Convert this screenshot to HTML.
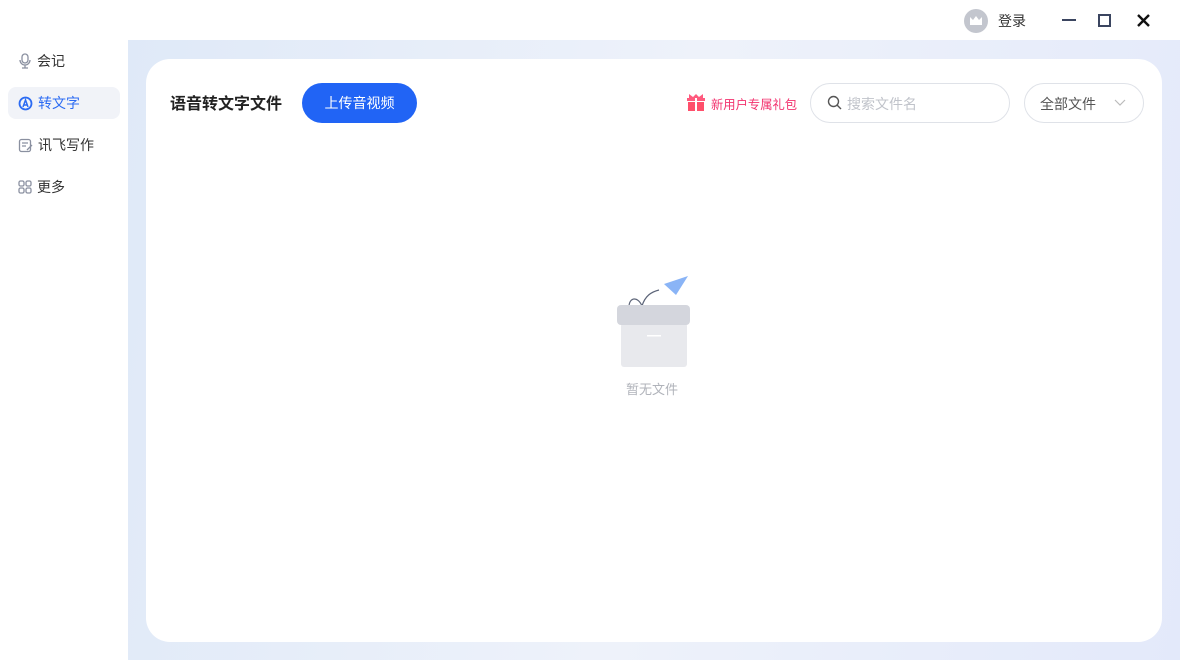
<!DOCTYPE html>
<html><head><meta charset="utf-8"><style>
*{margin:0;padding:0;box-sizing:border-box}
body{width:1180px;height:660px;overflow:hidden;background:#fff;font-family:"Liberation Sans","Noto Sans CJK SC",sans-serif;position:relative}
.top{position:absolute;left:0;top:0;width:1180px;height:40px;background:#fff}
.side{position:absolute;left:0;top:40px;width:128px;height:620px;background:#fff}
.item{position:absolute;left:8px;width:112px;height:32px;border-radius:8px;font-size:14px;color:#333;display:flex;align-items:center;padding-left:10px}
.item svg{margin-right:5px}
.main{position:absolute;left:128px;top:40px;width:1052px;height:620px;background:linear-gradient(100deg,#dfe9f8,#eef2fa 50%,#e3e9fa)}
.card{position:absolute;left:18px;top:19px;width:1016px;height:583px;background:#fff;border-radius:24px}
</style></head><body>
<div class="top">
<div style="position:absolute;left:964px;top:9px;width:24px;height:24px;border-radius:50%;background:#c3c6ce"></div>
<svg style="position:absolute;left:969px;top:15px" width="14" height="11"><path d="M1 2 L4 5 L7 1 L10 5 L13 2 V10 H1Z" fill="#fff"/></svg>
<div style="position:absolute;left:998px;top:11px;font-size:14px;color:#333">登录</div>
<div style="position:absolute;left:1062px;top:19px;width:14px;height:2px;background:#3b4560"></div>
<div style="position:absolute;left:1098px;top:14px;width:13px;height:13px;border:2.5px solid #3b4560"></div>
<svg style="position:absolute;left:1137px;top:14px" width="13" height="13"><path d="M1 1L12 12M12 1L1 12" stroke="#111" stroke-width="2.4"/></svg>
</div>
<div class="side">
<div class="item" style="top:5px"><svg width="14" height="16"><rect x="4" y="1" width="6" height="9" rx="3" fill="none" stroke="#8a90a0" stroke-width="1.3"/><path d="M2 7a5 5 0 0 0 10 0M7 12v3M4 15h6" fill="none" stroke="#8a90a0" stroke-width="1.3"/></svg>会记</div>
<div class="item" style="top:47px;background:#f1f3f8;color:#2b6bf3"><svg width="15" height="15"><circle cx="7.5" cy="7.5" r="6" fill="none" stroke="#2b6bf3" stroke-width="1.8"/><path d="M5 11L7.5 4L10 11M6 9h3" fill="none" stroke="#2b6bf3" stroke-width="1.5"/></svg>转文字</div>
<div class="item" style="top:89px"><svg width="15" height="15"><rect x="1.5" y="1.5" width="11" height="12" rx="2" fill="none" stroke="#8a90a0" stroke-width="1.3"/><path d="M4 5h6M4 8h4M9 12l5-5" stroke="#8a90a0" stroke-width="1.3"/></svg>讯飞写作</div>
<div class="item" style="top:131px"><svg width="14" height="14" fill="none" stroke="#8a90a0" stroke-width="1.3"><rect x="1" y="1" width="5" height="5" rx="1.5"/><rect x="8" y="1" width="5" height="5" rx="1.5"/><rect x="1" y="8" width="5" height="5" rx="1.5"/><rect x="8" y="8" width="5" height="5" rx="1.5"/></svg>更多</div>
</div>
<div class="main"><div class="card">
<div style="position:absolute;left:24px;top:31px;font-size:16px;font-weight:600;color:#222">语音转文字文件</div>
<div style="position:absolute;left:156px;top:24px;width:115px;height:40px;border-radius:20px;background:#2164f5;color:#fff;font-size:14px;display:flex;align-items:center;justify-content:center">上传音视频</div>
<svg style="position:absolute;left:540px;top:33px" width="20" height="20"><path d="M3 2l4 3 3-3 3 3 4-3v4H3z" fill="#ff5a7e"/><rect x="1" y="6" width="18" height="3" fill="#ff5a7e"/><rect x="2" y="10" width="16" height="9" fill="#ff4f6b"/><rect x="9" y="6" width="2" height="13" fill="#fff"/></svg>
<div style="position:absolute;left:565px;top:36px;font-size:12.3px;color:#f2326e">新用户专属礼包</div>
<div style="position:absolute;left:664px;top:24px;width:200px;height:40px;border:1px solid #dfe2e8;border-radius:20px"></div>
<svg style="position:absolute;left:681px;top:36px" width="16" height="16"><circle cx="6.5" cy="6.5" r="5" fill="none" stroke="#555" stroke-width="1.4"/><path d="M10 10l4 4" stroke="#555" stroke-width="1.4"/></svg>
<div style="position:absolute;left:701px;top:35px;font-size:14px;color:#c0c3ca">搜索文件名</div>
<div style="position:absolute;left:878px;top:24px;width:120px;height:40px;border:1px solid #dfe2e8;border-radius:20px"></div>
<div style="position:absolute;left:894px;top:35px;font-size:14px;color:#555">全部文件</div>
<svg style="position:absolute;left:968px;top:40px" width="12" height="8"><path d="M1 1l5 5 5-5" fill="none" stroke="#bbb" stroke-width="1.2"/></svg>
<svg style="position:absolute;left:468px;top:210px" width="80" height="102"><path d="M15 38c0-10 9-11 13-1 3-10 9-14 17-16" fill="none" stroke="#5c6478" stroke-width="1.2"/><path d="M50 15l24-8-12 19z" fill="#8ab4f6"/><rect x="7" y="54" width="66" height="44" rx="3" fill="#e8e9ed"/><rect x="3" y="36" width="73" height="20" rx="4" fill="#d4d6dd"/><rect x="33" y="66" width="14" height="1.5" fill="#fff"/></svg>
<div style="position:absolute;left:480px;top:320px;font-size:13px;color:#b0b3ba">暂无文件</div>
</div></div>
</body></html>
